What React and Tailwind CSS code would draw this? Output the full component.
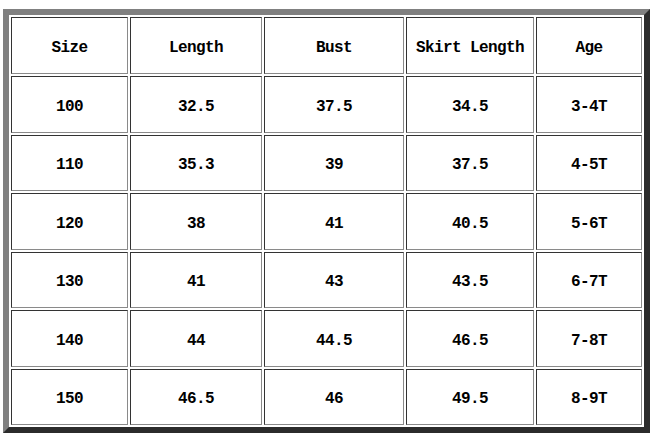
const COLS = [
  { key: 'size', label: 'Size', w: 'w-[117px]' },
  { key: 'length', label: 'Length', w: 'w-[132px]' },
  { key: 'bust', label: 'Bust', w: 'w-[140px]' },
  { key: 'skirt', label: 'Skirt Length', w: 'w-[128px]' },
  { key: 'age', label: 'Age', w: 'w-[106px]' },
]

const ROWS = [
  ['100', '32.5', '37.5', '34.5', '3-4T'],
  ['110', '35.3', '39', '37.5', '4-5T'],
  ['120', '38', '41', '40.5', '5-6T'],
  ['130', '41', '43', '43.5', '6-7T'],
  ['140', '44', '44.5', '46.5', '7-8T'],
  ['150', '46.5', '46', '49.5', '8-9T'],
]

const HEIGHTS = ['h-[57px]', 'h-[57px]', 'h-[56px]', 'h-[57px]', 'h-[56px]', 'h-[57px]', 'h-[56px]']

const cell =
  'border border-t-[#333333] border-l-[#333333] border-r-[#8a8a8a] border-b-[#8a8a8a] text-center align-middle p-0 pt-[4px]'

export default function App() {
  return (
    <div className="bg-white w-[656px] h-[441px] pt-[9px] pl-[3px] text-black font-['Liberation_Mono',monospace] text-[16px] tracking-[-0.6px] font-bold">
      <table className="table-fixed w-[647px] border-separate border-spacing-[2px] border-[6px] border-t-[#808080] border-l-[#808080] border-r-[#2b2b2b] border-b-[#2b2b2b]">
        <tbody>
          <tr>
            {COLS.map((c) => (
              <td key={c.key} className={`${cell} ${c.w} ${HEIGHTS[0]}`}>
                {c.label}
              </td>
            ))}
          </tr>
          {ROWS.map((row, i) => (
            <tr key={row[0]}>
              {row.map((v, j) => (
                <td key={j} className={`${cell} ${HEIGHTS[i + 1]}`}>
                  {v}
                </td>
              ))}
            </tr>
          ))}
        </tbody>
      </table>
    </div>
  )
}
